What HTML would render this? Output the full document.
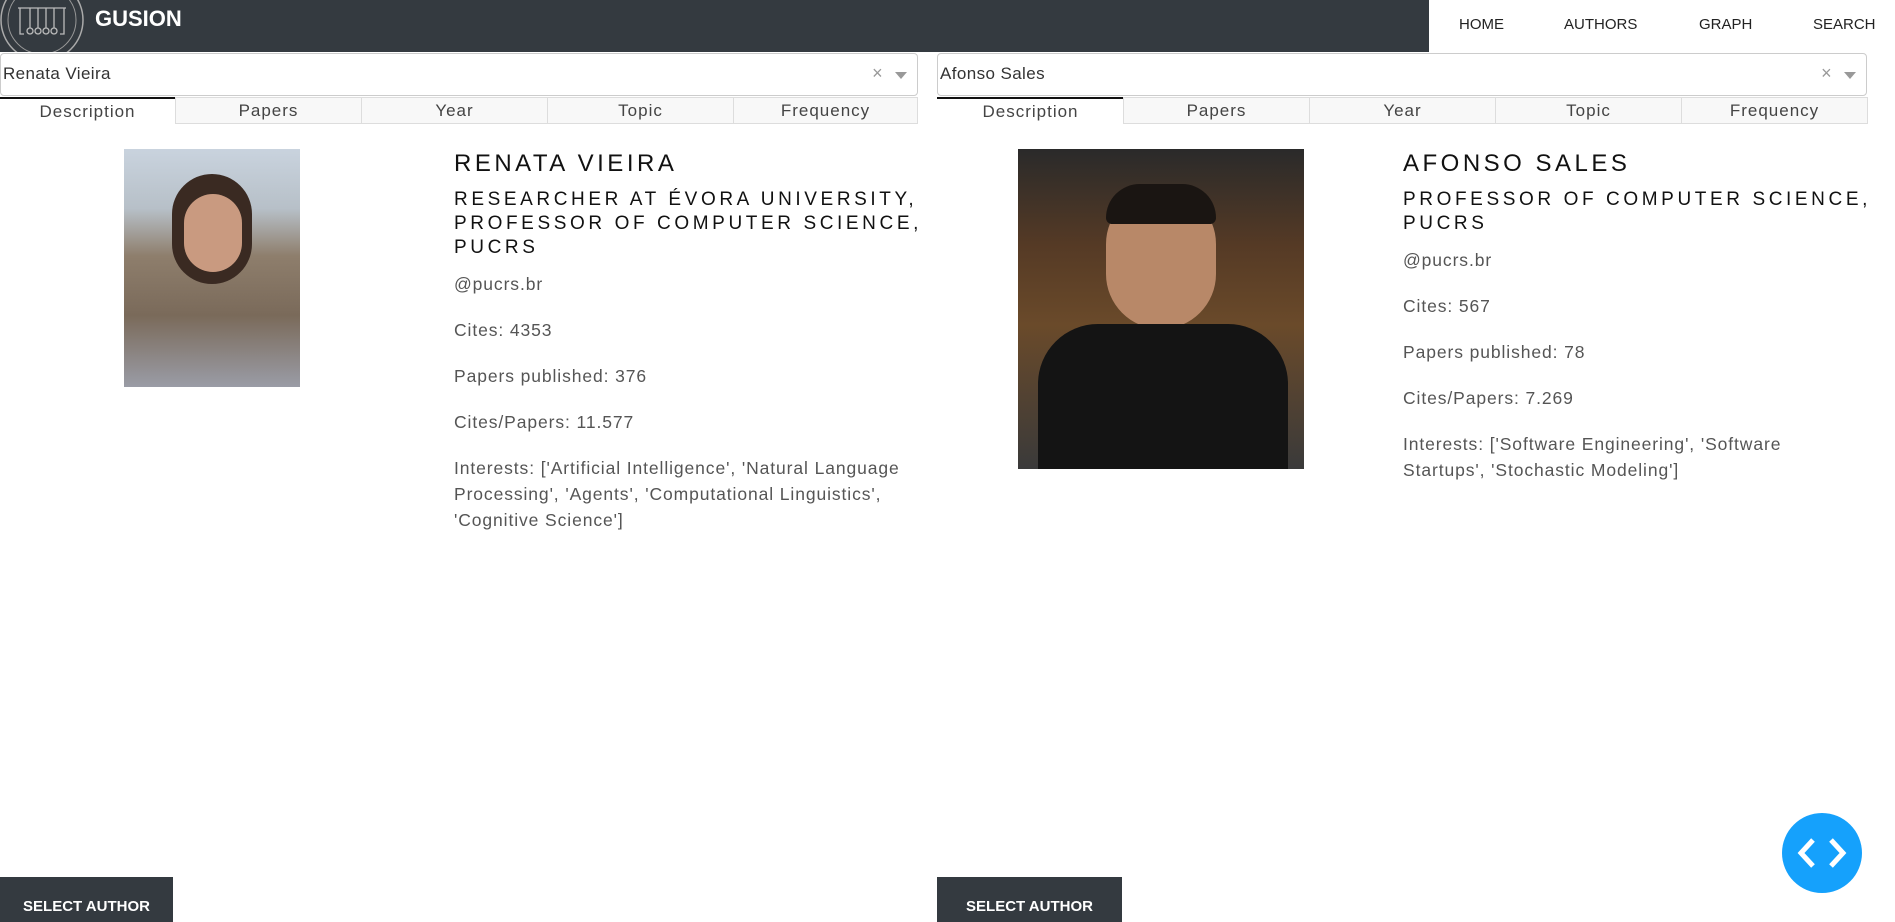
<!DOCTYPE html>
<html><head><meta charset="utf-8"><style>
*{margin:0;padding:0;box-sizing:border-box}
body{width:1895px;height:922px;overflow:hidden;background:#fff;font-family:"Liberation Sans",sans-serif;position:relative;color:#222}
.a{position:absolute}
.hdr{left:0;top:0;width:1429px;height:52px;background:#343a40}
.nav{top:16px;font-size:15px;color:#222}
.sel{height:43px;border:1px solid #ccc;border-radius:4px;background:#fff;font-size:17px;color:#333;padding:10px 0 0 2px;letter-spacing:.4px}
.sel .x{position:absolute;right:34px;top:9px;color:#999;font-size:18px}
.sel .c{position:absolute;right:10px;top:18px;border-left:6px solid transparent;border-right:6px solid transparent;border-top:7px solid #999}
.tab{top:97px;height:27px;border:1px solid #ddd;background:#f8f8f8;font-size:17px;color:#444;text-align:center;line-height:26px;letter-spacing:1px}
.tab.on{background:#fff;border:none;border-top:2px solid #111}
.name{font-size:24px;letter-spacing:3.5px;color:#111}
.sub{font-size:19px;letter-spacing:3.6px;line-height:24px;color:#111}
.t{font-size:17.5px;color:#555;letter-spacing:.9px;line-height:26px}
.btn{top:877px;height:45px;background:#343a40;color:#fff;font-size:15px;font-weight:bold;padding-top:21px;text-align:center}
</style></head><body>
<div class="a hdr"></div>
<svg class="a" style="left:0;top:0" width="90" height="52"><circle cx="42" cy="20" r="41" fill="none" stroke="#aaa" stroke-width="1.5"/><circle cx="42" cy="20" r="34" fill="none" stroke="#999" stroke-width="1"/><g stroke="#bbb" fill="none" stroke-width="1.3"><path d="M18 8h48M20 8v26h4M64 8v26h-4M30 8v20M38 8v20M46 8v20M54 8v20"/><circle cx="30" cy="31" r="3"/><circle cx="38" cy="31" r="3"/><circle cx="46" cy="31" r="3"/><circle cx="54" cy="31" r="3"/></g></svg>
<div class="a" style="left:95px;top:6px;font-size:22px;font-weight:bold;color:#fff">GUSION</div>
<div class="a nav" style="left:1459px">HOME</div>
<div class="a nav" style="left:1564px">AUTHORS</div>
<div class="a nav" style="left:1699px">GRAPH</div>
<div class="a nav" style="left:1813px">SEARCH</div>

<div class="a sel" style="left:0;top:53px;width:918px">Renata Vieira<span class="x">×</span><span class="c"></span></div>
<div class="a sel" style="left:937px;top:53px;width:930px">Afonso Sales<span class="x">×</span><span class="c"></span></div>

<div class="a tab on" style="left:0;width:175px">Description</div>
<div class="a tab" style="left:175px;width:187px">Papers</div>
<div class="a tab" style="left:361px;width:187px">Year</div>
<div class="a tab" style="left:547px;width:187px">Topic</div>
<div class="a tab" style="left:733px;width:185px">Frequency</div>
<div class="a tab on" style="left:937px;width:187px">Description</div>
<div class="a tab" style="left:1123px;width:187px">Papers</div>
<div class="a tab" style="left:1309px;width:187px">Year</div>
<div class="a tab" style="left:1495px;width:187px">Topic</div>
<div class="a tab" style="left:1681px;width:187px">Frequency</div>

<div class="a" style="left:124px;top:149px;width:176px;height:238px;background:linear-gradient(180deg,#c9d3de 0%,#b7c0c8 25%,#8e7e6c 45%,#7a6a5a 70%,#9a9ca6 100%)">
<div class="a" style="left:48px;top:25px;width:80px;height:110px;border-radius:40px;background:#3a2a22"></div>
<div class="a" style="left:60px;top:45px;width:58px;height:78px;border-radius:29px;background:#c99a80"></div></div>
<div class="a" style="left:1018px;top:149px;width:286px;height:320px;background:linear-gradient(180deg,#2a2a2a 0%,#553a25 30%,#6a4a2a 55%,#3a3a3a 100%)">
<div class="a" style="left:88px;top:40px;width:110px;height:140px;border-radius:55px;background:#b88868"></div>
<div class="a" style="left:88px;top:35px;width:110px;height:40px;border-radius:55px 55px 10px 10px;background:#1a1512"></div>
<div class="a" style="left:20px;top:175px;width:250px;height:145px;border-radius:60px 60px 0 0;background:#141414"></div></div>

<div class="a name" style="left:454px;top:150px">RENATA VIEIRA</div>
<div class="a sub" style="left:454px;top:188px">RESEARCHER AT ÉVORA UNIVERSITY,<br>PROFESSOR OF COMPUTER SCIENCE,<br>PUCRS</div>
<div class="a t" style="left:454px;top:271px">@pucrs.br</div>
<div class="a t" style="left:454px;top:317px">Cites: 4353</div>
<div class="a t" style="left:454px;top:363px">Papers published: 376</div>
<div class="a t" style="left:454px;top:409px">Cites/Papers: 11.577</div>
<div class="a t" style="left:454px;top:455px;width:480px">Interests: ['Artificial Intelligence', 'Natural Language Processing', 'Agents', 'Computational Linguistics', 'Cognitive Science']</div>

<div class="a name" style="left:1403px;top:150px">AFONSO SALES</div>
<div class="a sub" style="left:1403px;top:188px">PROFESSOR OF COMPUTER SCIENCE,<br>PUCRS</div>
<div class="a t" style="left:1403px;top:247px">@pucrs.br</div>
<div class="a t" style="left:1403px;top:293px">Cites: 567</div>
<div class="a t" style="left:1403px;top:339px">Papers published: 78</div>
<div class="a t" style="left:1403px;top:385px">Cites/Papers: 7.269</div>
<div class="a t" style="left:1403px;top:431px;width:420px">Interests: ['Software Engineering', 'Software Startups', 'Stochastic Modeling']</div>

<div class="a btn" style="left:0;width:173px">SELECT AUTHOR</div>
<div class="a btn" style="left:937px;width:185px">SELECT AUTHOR</div>

<svg class="a" style="left:1781px;top:812px" width="82" height="82"><circle cx="41" cy="41" r="40" fill="#15a1fc"/><path d="M32 28L20 41l12 13M50 28l12 13-12 13" stroke="#fff" stroke-width="5" fill="none"/></svg>
</body></html>
